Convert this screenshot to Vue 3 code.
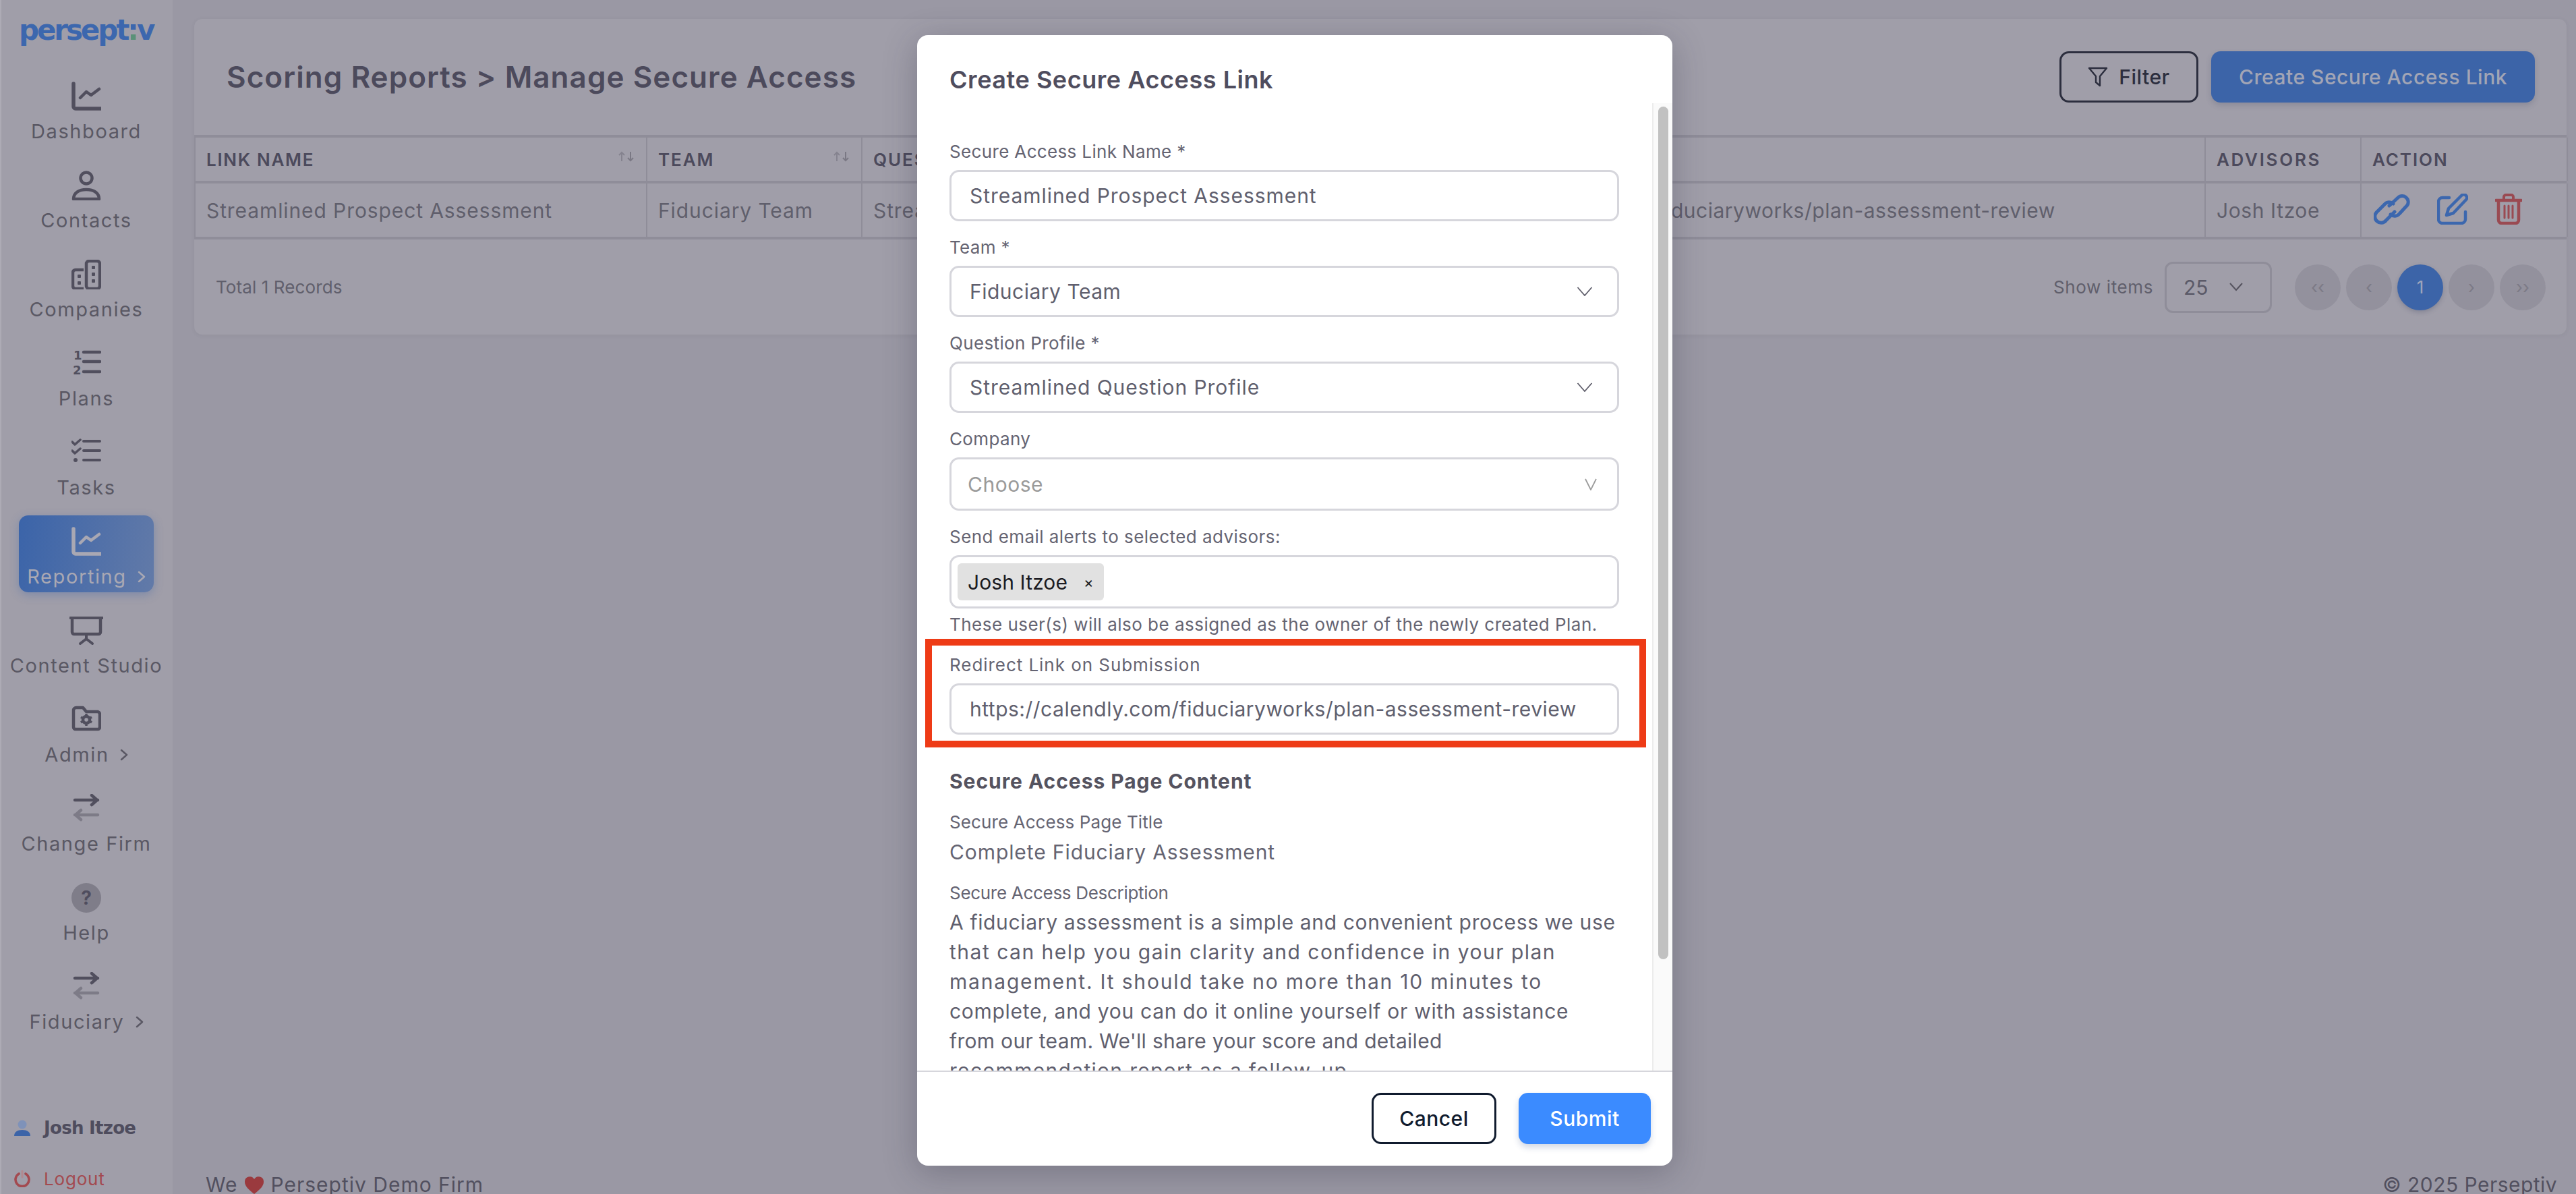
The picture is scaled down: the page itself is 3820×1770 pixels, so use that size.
<script setup>
const chart = '<path d="M3 3v34a3 3 0 0 0 3 3h38" fill="none" stroke="currentColor" stroke-width="5.500" stroke-linecap="round"/><path d="M13 24l9-9 7 5 12-9" fill="none" stroke="currentColor" stroke-width="4.500" stroke-linecap="round" stroke-linejoin="round"/>'
const swap = '<path d="M5 9h34M30 2l8 7-8 7" fill="none" stroke="currentColor" stroke-width="4.500" stroke-linecap="round" stroke-linejoin="round"/><path d="M39 31H5M14 24l-8 7 8 7" fill="none" stroke="currentColor" stroke-width="4.500" stroke-linecap="round" stroke-linejoin="round" opacity=".45"/>'
const nav = [
  { label: 'Dashboard', icon: chart },
  { label: 'Contacts', icon: '<circle cx="22" cy="11" r="8.500" fill="none" stroke="currentColor" stroke-width="4.500"/><path d="M3 42c0-9 8-14 19-14s19 5 19 14z" fill="none" stroke="currentColor" stroke-width="4.500" stroke-linejoin="round"/>' },
  { label: 'Companies', icon: '<rect x="22" y="2" width="20" height="41" rx="4" fill="none" stroke="currentColor" stroke-width="4.500"/><path d="M18 15H6a4 4 0 0 0-4 4v20a4 4 0 0 0 4 4h12" fill="none" stroke="currentColor" stroke-width="4.500"/><g fill="currentColor"><rect x="30" y="9" width="5" height="5" rx="1"/><rect x="30" y="19" width="5" height="5" rx="1"/><rect x="30" y="29" width="5" height="5" rx="1"/><rect x="9" y="22" width="5" height="5" rx="1"/><rect x="9" y="32" width="5" height="5" rx="1"/></g>' },
  { label: 'Plans', icon: '<text x="3" y="16" class="num">1</text><text x="2" y="38" class="num">2</text><path d="M18 5h24M18 19h24M18 34h24" fill="none" stroke="currentColor" stroke-width="4.500" stroke-linecap="round"/>' },
  { label: 'Tasks', icon: '<path d="M1 6l4 4 8-7M1 19l4 4 8-7" fill="none" stroke="currentColor" stroke-width="3.500" stroke-linecap="round" stroke-linejoin="round"/><circle cx="6" cy="33" r="3" fill="currentColor"/><path d="M18 5h24M18 19h24M18 33h24" fill="none" stroke="currentColor" stroke-width="4" stroke-linecap="round"/>' },
  { label: 'Reporting', icon: chart, arrow: true, active: true },
  { label: 'Content Studio', icon: '<path d="M1 3h48" stroke="currentColor" stroke-width="4" stroke-linecap="round" fill="none"/><path d="M4 4v20a3 3 0 0 0 3 3h36a3 3 0 0 0 3-3V4" stroke="currentColor" stroke-width="4.500" fill="none"/><path d="M25 28v6M25 34l-9 7M25 34l9 7" stroke="currentColor" stroke-width="4" stroke-linecap="round" fill="none"/>', wide: true },
  { label: 'Admin', icon: '<path d="M3 8a4 4 0 0 1 4-4h10l5 6h17a4 4 0 0 1 3 3v20a3 3 0 0 1-3 3H6a3 3 0 0 1-3-3z" fill="none" stroke="currentColor" stroke-width="4.500" stroke-linejoin="round"/><circle cx="22" cy="22" r="5" fill="none" stroke="currentColor" stroke-width="4.500"/><path d="M22 13v3M22 28v3M14 18l3 2M27 24l3 2M14 26l3-2M27 20l3-2" stroke="currentColor" stroke-width="3.500" fill="none"/>', arrow: true },
  { label: 'Change Firm', icon: swap },
  { label: 'Help', help: true },
  { label: 'Fiduciary', icon: swap, arrow: true }
]
const desc = [
  { t: 'A fiduciary assessment is a simple and convenient process we use', ls: 0.65 },
  { t: 'that can help you gain clarity and confidence in your plan', ls: 1.5 },
  { t: 'management. It should take no more than 10 minutes to', ls: 1.8 },
  { t: 'complete, and you can do it online yourself or with assistance', ls: 0.7 },
  { t: "from our team. We'll share your score and detailed", ls: 0.3 },
  { t: 'recommendation report as a follow-up.', ls: 1.3 }
]
const pages = ['‹‹', '‹', '1', '›', '››']
</script>

<template>
  <div class="page">
    <aside class="side">
      <div class="logo">persept<span class="colon">:</span>v</div>
      <nav class="nav">
        <div v-for="n in nav" :key="n.label" class="item" :class="{ active: n.active }">
          <div class="ic">
            <span v-if="n.help" class="help">?</span>
            <svg v-else :width="n.wide ? 50 : 44" height="44" :viewBox="n.wide ? '0 0 50 44' : '0 0 44 44'" v-html="n.icon"></svg>
          </div>
          <div class="lab">{{ n.label }}<svg v-if="n.arrow" class="gt" width="12" height="18" viewBox="0 0 12 18"><path d="M2 2l8 7-8 7" fill="none" stroke="currentColor" stroke-width="2.500" stroke-linecap="round" stroke-linejoin="round"/></svg></div>
        </div>
      </nav>
      <div class="user">
        <div class="urow">
          <svg width="24" height="24" viewBox="0 0 24 24"><circle cx="12" cy="7" r="6.500" fill="#7f92b9"/><path d="M0 24c0-6 5-9 12-9s12 3 12 9z" fill="#3c64a8"/></svg>
          <b>Josh Itzoe</b>
        </div>
        <div class="urow out">
          <svg width="24" height="26" viewBox="0 0 24 26"><path d="M7 6a10 10 0 1 0 10 0" fill="none" stroke="#a34a50" stroke-width="3.600" stroke-linecap="round"/><path d="M12 2v9" stroke="#b18a90" stroke-width="3" stroke-linecap="round"/></svg>
          <span>Logout</span>
        </div>
      </div>
    </aside>

    <main class="main">
      <section class="card">
        <header class="chead">
          <h1>Scoring Reports &gt; Manage Secure Access</h1>
          <div class="actions">
            <button class="btn filter">
              <svg width="30" height="30" viewBox="0 0 30 30"><path d="M2 2h26L18 14v14l-6-5V14z" fill="none" stroke="#2c2e3e" stroke-width="2.400" stroke-linejoin="round"/></svg>
              Filter
            </button>
            <button class="btn create">Create Secure Access Link</button>
          </div>
        </header>
        <div class="trow thead">
          <div class="cell tight">LINK NAME<svg class="sort" width="26" height="16" viewBox="0 0 26 16"><path d="M6 15V2M2 6l4-4 4 4" fill="none" stroke="#85838f" stroke-width="2"/><path d="M19 1v13M15 10l4 4 4-4" fill="none" stroke="#7a7884" stroke-width="2"/></svg></div>
          <div class="cell">TEAM<svg class="sort" width="26" height="16" viewBox="0 0 26 16"><path d="M6 15V2M2 6l4-4 4 4" fill="none" stroke="#85838f" stroke-width="2"/><path d="M19 1v13M15 10l4 4 4-4" fill="none" stroke="#7a7884" stroke-width="2"/></svg></div>
          <div class="cell">QUESTION PROFILE</div>
          <div class="cell">COMPANY</div>
          <div class="cell">REDIRECT LINK</div>
          <div class="cell loose">ADVISORS</div>
          <div class="cell">ACTION</div>
        </div>
        <div class="trow tbody">
          <div class="cell">Streamlined Prospect Assessment</div>
          <div class="cell">Fiduciary Team</div>
          <div class="cell">Streamlined Question Profile</div>
          <div class="cell"></div>
          <div class="cell linkcell">https://calendly.com/fiduciaryworks/plan-assessment-review</div>
          <div class="cell advisor">Josh Itzoe</div>
          <div class="cell icons">
            <svg width="54" height="46" viewBox="0 0 54 46"><g fill="none" stroke="#3c67ae" stroke-width="5" stroke-linecap="round"><path d="M23 18l13-12a9 9 0 0 1 14 11L38 30a9 9 0 0 1-13 1"/><path d="M31 27L18 40A9 9 0 0 1 4 28l12-12a9 9 0 0 1 13-1"/></g></svg>
            <svg width="46" height="46" viewBox="0 0 46 46"><path d="M18 6H8a6 6 0 0 0-6 6v26a6 6 0 0 0 6 6h28a6 6 0 0 0 6-6V27" fill="none" stroke="#3c67ae" stroke-width="4.500" stroke-linecap="round"/><path d="M14 32l3-10L36 3a4 4 0 0 1 7 6L24 29z" fill="none" stroke="#3c67ae" stroke-width="4.500" stroke-linejoin="round"/></svg>
            <svg width="40" height="46" viewBox="0 0 40 46"><g fill="none" stroke="#9a4a52" stroke-width="4" stroke-linecap="round"><path d="M1 10h38" stroke-width="4.500"/><path d="M13 9V5a3 3 0 0 1 3-3h8a3 3 0 0 1 3 3v4"/><path d="M5 11v28a5 5 0 0 0 5 5h20a5 5 0 0 0 5-5V11" stroke-width="4.500"/><path d="M14 18v18M20 18v18M26 18v18" stroke-width="3"/></g></svg>
          </div>
        </div>
        <footer class="cfoot">
          <span class="total">Total 1 Records</span>
          <div class="pager">
            <span class="show">Show items</span>
            <div class="size"><span>25</span><svg width="22" height="13" viewBox="0 0 22 13"><path d="M2 1l9 10 9-10" fill="none" stroke="#55535f" stroke-width="2"/></svg></div>
            <div class="pgs">
              <span v-for="p in pages" :key="p" class="pg" :class="{ on: p === '1' }">{{ p }}</span>
            </div>
          </div>
        </footer>
      </section>
      <footer class="foot">
        <span>We <svg class="heart" width="30" height="28" viewBox="0 0 30 28"><path d="M15 27C6 20 1 15 1 9a7.500 7.500 0 0 1 14-4 7.500 7.500 0 0 1 14 4c0 6-5 11-14 18z" fill="#9a3a3e"/></svg> Perseptiv Demo Firm</span>
        <span class="copy">© 2025 Perseptiv</span>
      </footer>
    </main>

    <div class="overlay">
      <div class="modal">
        <div class="mhead">Create Secure Access Link</div>
        <div class="mbody">
          <div class="form">
            <label class="flabel">Secure Access Link Name *</label>
            <div class="input roomy">Streamlined Prospect Assessment</div>
            <label class="flabel">Team *</label>
            <div class="input">Fiduciary Team<svg width="24" height="14" viewBox="0 0 24 14"><path d="M1.500 1l10.500 12L22.500 1" fill="none" stroke="#5f5e6b" stroke-width="1.800"/></svg></div>
            <label class="flabel">Question Profile *</label>
            <div class="input roomy">Streamlined Question Profile<svg width="24" height="14" viewBox="0 0 24 14"><path d="M1.500 1l10.500 12L22.500 1" fill="none" stroke="#5f5e6b" stroke-width="1.800"/></svg></div>
            <label class="flabel">Company</label>
            <div class="input tall choose">Choose<svg width="18" height="18" viewBox="0 0 18 18"><path d="M1 1l8 16 8-16" fill="none" stroke="#9b9b9b" stroke-width="1.800"/></svg></div>
            <label class="flabel send">Send email alerts to selected advisors:</label>
            <div class="input tall multi"><span class="chip">Josh Itzoe<i>×</i></span></div>
            <p class="hint">These user(s) will also be assigned as the owner of the newly created Plan.</p>
            <div class="redirect">
              <label class="flabel rlabel">Redirect Link on Submission</label>
              <div class="input">https://calendly.com/fiduciaryworks/plan-assessment-review</div>
              <div class="callout"></div>
            </div>
            <h3 class="section">Secure Access Page Content</h3>
            <div class="flabel sub">Secure Access Page Title</div>
            <div class="val">Complete Fiduciary Assessment</div>
            <div class="flabel sub2">Secure Access Description</div>
            <div class="para"><div v-for="l in desc" :key="l.t" :style="{ letterSpacing: l.ls + 'px' }">{{ l.t }}</div></div>
          </div>
          <div class="track"><div class="thumb"></div></div>
        </div>
        <div class="mfoot">
          <button class="btn cancel">Cancel</button>
          <button class="btn submit">Submit</button>
        </div>
      </div>
    </div>
  </div>
</template>

<style scoped>
.page { position: relative; display: flex; width: 3820px; height: 1770px; overflow: hidden; background: #9a98a4; font-family: Inter, "Noto Sans", sans-serif; color: #4f4d5e; }
.side { box-sizing: border-box; width: 256px; height: 1770px; flex: none; display: flex; flex-direction: column; padding: 28px 0 3px; background: #a09ea9; border-left: 2px solid #adabb5; }
.logo { width: 200px; height: 40px; margin: 0 0 36px 26px; font: 700 42px/34px "DejaVu Sans", sans-serif; letter-spacing: -3.1px; color: #3c67ae; white-space: nowrap; }
.colon { background: linear-gradient(#3c67ae 55%, #5a9178 55%); -webkit-background-clip: text; background-clip: text; color: transparent; }
.nav { display: flex; flex-direction: column; gap: 18px; }
.item { box-sizing: border-box; height: 114px; width: 200px; margin-left: 26px; padding-top: 17px; display: flex; flex-direction: column; align-items: center; border-radius: 14px; color: #5a5864; white-space: nowrap; }
.item.active { background: linear-gradient(100deg, #3b64a9, #627aa8); color: #a9a8b3; box-shadow: 0 4px 14px rgba(60, 100, 170, .35); }
.ic { height: 44px; display: flex; align-items: center; justify-content: center; color: #514f5e; }
.active .ic { color: #a9a8b3; }
.help { width: 44px; height: 44px; border-radius: 50%; background: #7f7d89; color: #4f4d5e; font: 700 28px/44px Inter, sans-serif; text-align: center; }
.lab { margin-top: 12px; height: 36px; font-size: 29px; line-height: 36px; letter-spacing: 1.6px; display: flex; align-items: center; gap: 16px; }
.gt { flex: none; }
.user { margin-top: auto; display: flex; flex-direction: column; gap: 35px; }
.urow { height: 40px; display: flex; align-items: center; gap: 20px; padding-left: 19px; font-size: 26px; white-space: nowrap; }
.urow b { font: 700 26px "DejaVu Sans", sans-serif; letter-spacing: -.7px; color: #4f4d5e; }
.out { color: #a34a50; letter-spacing: .8px; }
.main { flex: 1; min-width: 0; display: flex; flex-direction: column; padding: 28px 14px 0 32px; }
.card { box-sizing: border-box; height: 468px; background: #a09ea9; border-radius: 12px; box-shadow: 0 1px 6px rgba(60, 60, 80, .08); }
.chead { height: 172px; display: flex; align-items: center; justify-content: space-between; padding: 0 47px 0 48px; }
h1 { margin: 0; font-size: 44px; font-weight: 600; color: #4c4a5c; letter-spacing: 1.05px; white-space: nowrap; }
.actions { display: flex; gap: 19px; }
.btn { box-sizing: border-box; height: 76px; border-radius: 14px; font-family: Inter, sans-serif; font-size: 30px; font-weight: 450; display: flex; align-items: center; justify-content: center; letter-spacing: .5px; border: 0; white-space: nowrap; }
.filter { width: 206px; gap: 16px; background: transparent; border: 3px solid #2c2e3e; color: #2c2e3e; }
.create { width: 480px; background: #3c64a8; color: #a2a5b5; box-shadow: 0 4px 8px rgba(50, 60, 90, .2); }
.trow { display: grid; grid-template-columns: 670px 319px 500px 353px 1139px 231px 306px; border-bottom: 4px solid #8f8d99; border-left: 2px solid #8f8d99; }
.thead { height: 72px; border-top: 4px solid #8f8d99; box-sizing: border-box; font-size: 26px; font-weight: 600; letter-spacing: 1.9px; color: #4c4a5c; }
.tbody { height: 83px; box-sizing: border-box; font-size: 30px; color: #605f6c; letter-spacing: .9px; }
.cell { display: flex; align-items: center; padding: 0 16px; border-right: 2px solid #8f8d99; white-space: nowrap; overflow: hidden; }
.tight { letter-spacing: 1.7px; }
.loose { letter-spacing: 2.7px; }
.linkcell { letter-spacing: .5px; }
.advisor { letter-spacing: .6px; }
.sort { margin-left: auto; align-self: flex-start; margin-top: 20px; }
.icons { padding-left: 18px; gap: 40px; padding-right: 0; }
.icons svg { flex: none; margin-top: -4px; }
.cfoot { height: 141px; display: flex; align-items: center; justify-content: space-between; padding: 0 31px 0 32px; }
.total { font-size: 26px; color: #605f6c; letter-spacing: .1px; }
.show { font-size: 26px; color: #605f6c; letter-spacing: .6px; }
.pager { display: flex; align-items: center; gap: 17px; }
.size { box-sizing: border-box; width: 159px; height: 76px; border: 3px solid #8f8d99; border-radius: 12px; display: flex; align-items: center; gap: 30px; padding-left: 25px; font-size: 30px; color: #5b5a68; }
.pgs { display: flex; gap: 8px; margin-left: 17px; }
.pg { width: 68px; height: 68px; border-radius: 50%; background: #93919d; color: #7c7a86; font-size: 26px; display: flex; align-items: center; justify-content: center; }
.pg.on { background: #3c64a8; color: #9ea5bc; box-shadow: 0 3px 6px rgba(50, 60, 90, .25); }
.foot { margin-top: auto; margin-bottom: -4px; display: flex; justify-content: space-between; padding: 0 14px 0 17px; font-size: 30px; line-height: 36px; color: #52505f; letter-spacing: 1px; }
.foot span { white-space: nowrap; }
.foot .copy { letter-spacing: .45px; }
.heart { vertical-align: -4px; }

.overlay { position: absolute; inset: 0; padding: 52px 0 0 20px; box-sizing: border-box; display: flex; justify-content: center; align-items: flex-start; }
.modal { width: 1120px; height: 1676px; background: #fff; border-radius: 16px; display: flex; flex-direction: column; overflow: hidden; box-shadow: 0 10px 50px rgba(40, 40, 60, .3); flex: none; }
.mhead { height: 101px; box-sizing: border-box; padding: 46px 0 0 48px; font-size: 36px; line-height: 40px; font-weight: 600; letter-spacing: .55px; color: #4f4d5e; flex: none; }
.mbody { flex: 1; min-height: 0; display: flex; }
.form { flex: 1; min-width: 0; padding: 56px 0 0 48px; overflow: hidden; }
.track { position: relative; width: 28px; flex: none; background: #fafafa; border-left: 2px solid #ececec; }
.thumb { position: absolute; left: 7px; top: 5px; width: 15px; height: 1264px; border-radius: 8px; background: #c1c1c1; }
.flabel { display: block; height: 32px; font-size: 26px; line-height: 32px; color: #656472; white-space: nowrap; letter-spacing: .35px; }
.send { letter-spacing: .45px; }
.rlabel { letter-spacing: .95px; }
.input { box-sizing: border-box; width: 993px; height: 76px; margin: 11px 0 23px; border: 3px solid #d6d6dc; border-radius: 14px; padding: 0 36px 0 27px; display: flex; align-items: center; justify-content: space-between; font-size: 30px; color: #605f6e; white-space: nowrap; letter-spacing: .5px; }
.roomy { letter-spacing: .95px; }
.tall { height: 79px; }
.choose { color: #9a9a9a; padding: 0 30px 0 24px; }
.multi { padding: 0 0 0 9px; margin-bottom: 0; }
.chip { width: 217px; height: 55px; box-sizing: border-box; border-radius: 6px; background: #e1e1e1; color: #1b1b22; padding-left: 15px; display: flex; align-items: center; letter-spacing: .1px; }
.chip i { font-style: normal; font-size: 22px; margin-left: 24px; }
.hint { margin: 8px 0 28px; font-size: 26px; line-height: 32px; height: 32px; color: #656472; white-space: nowrap; letter-spacing: .48px; }
.redirect { position: relative; width: 993px; }
.redirect .input { margin-bottom: 0; }
.callout { position: absolute; left: -36px; right: -40px; top: -23px; bottom: -19px; border: 10px solid #ee3b16; pointer-events: none; }
.section { margin: 49px 0 0; font-size: 30px; line-height: 40px; font-weight: 700; color: #55535f; letter-spacing: .95px; white-space: nowrap; }
.sub { margin-top: 25px; letter-spacing: .1px; }
.val { margin-top: 8px; font-size: 30px; line-height: 40px; color: #656472; letter-spacing: .9px; white-space: nowrap; }
.sub2 { margin-top: 25px; letter-spacing: -.3px; }
.para { margin-top: 5px; font-size: 30px; line-height: 44px; color: #605f6e; white-space: nowrap; }
.mfoot { height: 141px; box-sizing: border-box; border-top: 2px solid #d6d6dc; flex: none; display: flex; justify-content: flex-end; gap: 33px; padding: 31px 32px 0 0; }
.cancel { width: 185px; background: #fff; border: 3px solid #101b2e; color: #101b2e; }
.submit { width: 196px; background: #3b8bff; color: #fff; box-shadow: 0 5px 10px rgba(30, 60, 120, .2); }
</style>

<style>
html, body { margin: 0; padding: 0; overflow: hidden; }
.num { font: 700 18px "DejaVu Sans", sans-serif; fill: currentColor; }
</style>
